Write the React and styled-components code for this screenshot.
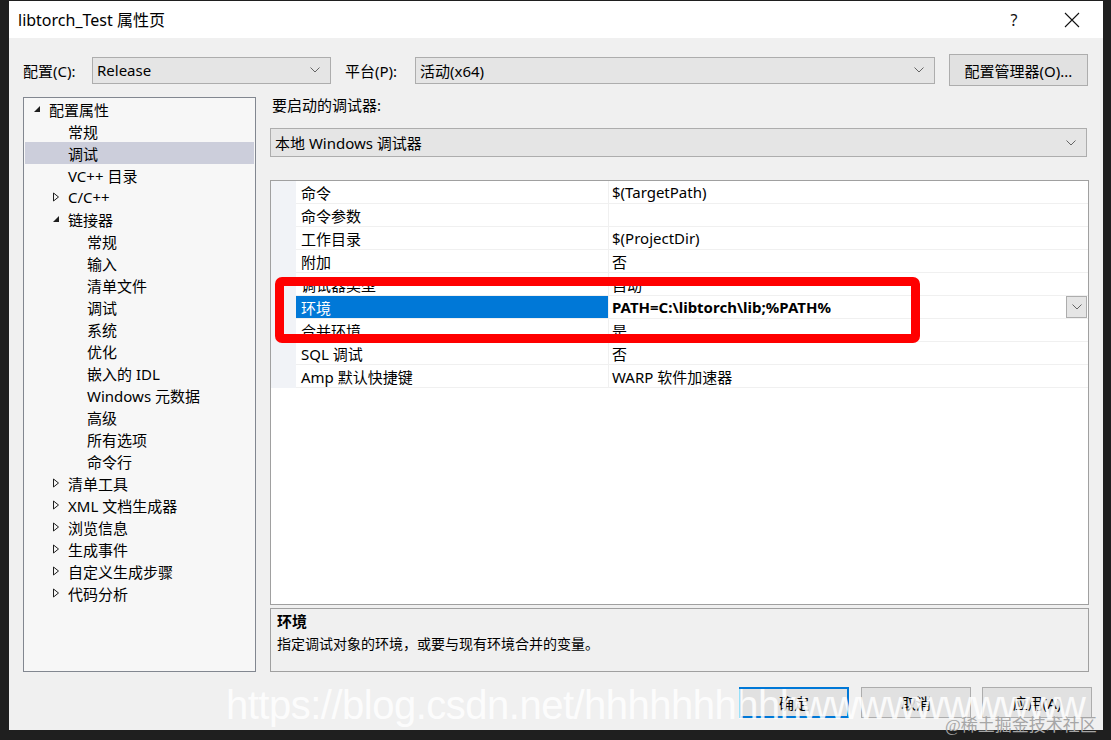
import styled, { createGlobalStyle, css } from "styled-components";

const GlobalStyle = createGlobalStyle`
  html, body {
    margin: 0;
    padding: 0;
    background: #1f1f1f;
  }
  body {
    font-family: "Noto Sans", "Noto Sans CJK SC", sans-serif;
    color: #000;
  }
`;

const tree = [
  { label: "配置属性", level: 0, toggle: "open" },
  { label: "常规", level: 1 },
  { label: "调试", level: 1, selected: true },
  { label: "VC++ 目录", level: 1 },
  { label: "C/C++", level: 1, toggle: "closed" },
  { label: "链接器", level: 1, toggle: "open" },
  { label: "常规", level: 2 },
  { label: "输入", level: 2 },
  { label: "清单文件", level: 2 },
  { label: "调试", level: 2 },
  { label: "系统", level: 2 },
  { label: "优化", level: 2 },
  { label: "嵌入的 IDL", level: 2 },
  { label: "Windows 元数据", level: 2 },
  { label: "高级", level: 2 },
  { label: "所有选项", level: 2 },
  { label: "命令行", level: 2 },
  { label: "清单工具", level: 1, toggle: "closed" },
  { label: "XML 文档生成器", level: 1, toggle: "closed" },
  { label: "浏览信息", level: 1, toggle: "closed" },
  { label: "生成事件", level: 1, toggle: "closed" },
  { label: "自定义生成步骤", level: 1, toggle: "closed" },
  { label: "代码分析", level: 1, toggle: "closed" },
];

const props = [
  { name: "命令", value: "$(TargetPath)" },
  { name: "命令参数", value: "" },
  { name: "工作目录", value: "$(ProjectDir)" },
  { name: "附加", value: "否" },
  { name: "调试器类型", value: "自动" },
  { name: "环境", value: "PATH=C:\\libtorch\\lib;%PATH%", selected: true },
  { name: "合并环境", value: "是" },
  { name: "SQL 调试", value: "否" },
  { name: "Amp 默认快捷键", value: "WARP 软件加速器" },
];

function Chevron() {
  return (
    <svg width="10" height="6" viewBox="0 0 10 6">
      <path d="M0.5 0.5 L5 5 L9.5 0.5" fill="none" stroke="#555" strokeWidth="0.9" />
    </svg>
  );
}

function Toggle({ kind }) {
  if (kind === "open") {
    return (
      <svg width="8" height="8" viewBox="0 0 8 8">
        <path d="M7 1 L7 7 L1 7 Z" fill="#1e1e1e" />
      </svg>
    );
  }
  if (kind === "closed") {
    return (
      <svg width="8" height="10" viewBox="0 0 8 10">
        <path d="M1.5 1 L6.5 5 L1.5 9 Z" fill="none" stroke="#1e1e1e" strokeWidth="1" />
      </svg>
    );
  }
  return null;
}

export default function App() {
  return (
    <Stage>
      <GlobalStyle />
      <Dialog>
        <TitleBar>
          <Title>libtorch_Test 属性页</Title>
          <TitleButton>?</TitleButton>
          <TitleButton>
            <svg width="16" height="16" viewBox="0 0 16 16">
              <path d="M1 1 L15 15 M15 1 L1 15" stroke="#111" strokeWidth="1.1" />
            </svg>
          </TitleButton>
        </TitleBar>

        <Content>
          <Toolbar>
            <FieldLabel $w={69}>配置(C):</FieldLabel>
            <Select $w={239}>
              <span>Release</span>
              <Chevron />
            </Select>
            <FieldLabel $w={70} $ml={14}>平台(P):</FieldLabel>
            <Select $w={520}>
              <span>活动(x64)</span>
              <Chevron />
            </Select>
            <Button $w={139} $h={32} $ml={14}>配置管理器(O)...</Button>
          </Toolbar>

          <Main>
            <Tree>
              {tree.map((item, i) => (
                <TreeRow key={i} $level={item.level} $selected={item.selected}>
                  <ToggleSlot>
                    <Toggle kind={item.toggle} />
                  </ToggleSlot>
                  {item.label}
                </TreeRow>
              ))}
            </Tree>

            <RightPane>
              <PaneLabel>要启动的调试器:</PaneLabel>
              <Select $w={817} $h={29}>
                <span>本地 Windows 调试器</span>
                <Chevron />
              </Select>

              <Grid>
                {props.map((p) => (
                  <GridRow key={p.name}>
                    <Margin />
                    <NameCell $selected={p.selected}>{p.name}</NameCell>
                    <ValueCell $bold={p.selected}>
                      <span>{p.value}</span>
                      {p.selected && (
                        <CellDrop>
                          <Chevron />
                        </CellDrop>
                      )}
                    </ValueCell>
                  </GridRow>
                ))}
              </Grid>

              <Description>
                <DescTitle>环境</DescTitle>
                <DescText>指定调试对象的环境，或要与现有环境合并的变量。</DescText>
              </Description>
            </RightPane>
          </Main>

          <Footer>
            <Button $w={110} $h={31} $default>确定</Button>
            <Button $w={110} $h={31} $ml={12}>取消</Button>
            <Button $w={110} $h={31} $ml={11}>应用(A)</Button>
          </Footer>
        </Content>
      </Dialog>

      <Highlight />
      <Watermark>https://blog.csdn.net/hhhhhhhhhhwwwwwwwwww</Watermark>
      <Credit>@稀土掘金技术社区</Credit>
    </Stage>
  );
}

const Stage = styled.div`
  position: relative;
  width: 1111px;
  height: 740px;
  overflow: hidden;
  box-sizing: border-box;
  padding: 1px 0 0 9px;
  background: #1f1f1f;
`;

const Dialog = styled.div`
  width: 1094px;
  height: 729px;
  background: #f0f0f0;
  display: flex;
  flex-direction: column;
`;

const TitleBar = styled.div`
  height: 37px;
  flex: none;
  background: #fff;
  display: flex;
  align-items: center;
  padding-left: 9px;
  padding-right: 2px;
`;

const Title = styled.div`
  font-size: 16px;
  flex: 1;
  line-height: 20px;
`;

const TitleButton = styled.div`
  width: 58px;
  height: 37px;
  display: flex;
  align-items: center;
  justify-content: center;
  font-size: 16px;
  color: #111;
`;

const Content = styled.div`
  flex: 1;
  display: flex;
  flex-direction: column;
  padding: 16px 14px 0 14px;
  font-size: 15px;
`;

const Toolbar = styled.div`
  display: flex;
  align-items: center;
  height: 32px;
`;

const FieldLabel = styled.div`
  width: ${({ $w }) => $w}px;
  margin-left: ${({ $ml }) => $ml || 0}px;
  flex: none;
  white-space: nowrap;
`;

const Select = styled.div`
  width: ${({ $w }) => $w}px;
  height: ${({ $h }) => $h || 27}px;
  flex: none;
  box-sizing: border-box;
  border: 1px solid #adadad;
  background: #e5e5e5;
  display: flex;
  align-items: center;
  justify-content: space-between;
  padding: 0 10px 0 4px;
`;

const Button = styled.div`
  width: ${({ $w }) => $w}px;
  height: ${({ $h }) => $h}px;
  margin-left: ${({ $ml }) => $ml || 0}px;
  flex: none;
  box-sizing: border-box;
  border: 1px solid #adadad;
  background: #e1e1e1;
  display: flex;
  align-items: center;
  justify-content: center;
  ${({ $default }) =>
    $default &&
    css`
      border: 2px solid #0078d7;
    `}
`;

const Main = styled.div`
  margin-top: 11px;
  height: 575px;
  display: grid;
  grid-template-columns: 233px 819px;
  column-gap: 14px;
`;

const Tree = styled.div`
  box-sizing: border-box;
  border: 1px solid #828790;
  background: #f7f7f7;
  padding: 0 1px 1px;
`;

const TreeRow = styled.div`
  height: 22px;
  display: flex;
  align-items: center;
  padding-left: ${({ $level }) => 8 + $level * 19}px;
  white-space: nowrap;
  background: ${({ $selected }) => ($selected ? "#cccedb" : "transparent")};
`;

const ToggleSlot = styled.span`
  width: 16px;
  flex: none;
  display: flex;
  align-items: center;
`;

const RightPane = styled.div`
  display: flex;
  flex-direction: column;
`;

const PaneLabel = styled.div`
  height: 31px;
  padding-left: 2px;
  line-height: 17px;
`;

const Grid = styled.div`
  margin-top: 23px;
  height: 425px;
  box-sizing: border-box;
  border: 1px solid #a0a0a0;
  background: #fff;
  display: flex;
  flex-direction: column;
`;

const GridRow = styled.div`
  height: 23px;
  flex: none;
  display: grid;
  grid-template-columns: 25px 313px 1fr;
`;

const Margin = styled.div`
  background: #f1f3f7;
`;

const NameCell = styled.div`
  padding-left: 5px;
  display: flex;
  align-items: center;
  border-bottom: 1px solid #f0f0f0;
  border-right: 1px solid #f0f0f0;
  ${({ $selected }) =>
    $selected &&
    css`
      background: #0078d7;
      color: #fff;
    `}
`;

const ValueCell = styled.div`
  padding-left: 3px;
  display: flex;
  align-items: center;
  justify-content: space-between;
  border-bottom: 1px solid #f0f0f0;
  font-weight: ${({ $bold }) => ($bold ? 700 : 400)};
`;

const CellDrop = styled.div`
  width: 21px;
  height: 22px;
  box-sizing: border-box;
  border: 1px solid #adadad;
  background: #e5e5e5;
  display: flex;
  align-items: center;
  justify-content: center;
  margin-right: 1px;
`;

const Description = styled.div`
  margin-top: 3px;
  height: 64px;
  box-sizing: border-box;
  border: 1px solid #a0a0a0;
  padding: 1px 6px;
`;

const DescTitle = styled.div`
  font-weight: 700;
  line-height: 22px;
`;

const DescText = styled.div`
  line-height: 24px;
  font-size: 14px;
`;

const Footer = styled.div`
  margin-top: 15px;
  display: flex;
  justify-content: flex-end;
  margin-right: -3px;
`;

const Highlight = styled.div`
  position: absolute;
  left: 275px;
  top: 277px;
  width: 645px;
  height: 66px;
  box-sizing: border-box;
  border: 9px solid #ff0000;
  border-radius: 7px;
`;

const Watermark = styled.div`
  position: absolute;
  left: 226px;
  top: 680px;
  font-family: "Liberation Sans", Arial, sans-serif;
  font-size: 40px;
  line-height: 50px;
  color: rgba(255, 255, 255, 0.85);
  white-space: nowrap;
  letter-spacing: -0.5px;
`;

const Credit = styled.div`
  position: absolute;
  left: 945px;
  top: 711px;
  font-family: "Liberation Serif", "Noto Sans CJK SC", serif;
  font-size: 17px;
  color: #a6a6a6;
  white-space: nowrap;
`;
